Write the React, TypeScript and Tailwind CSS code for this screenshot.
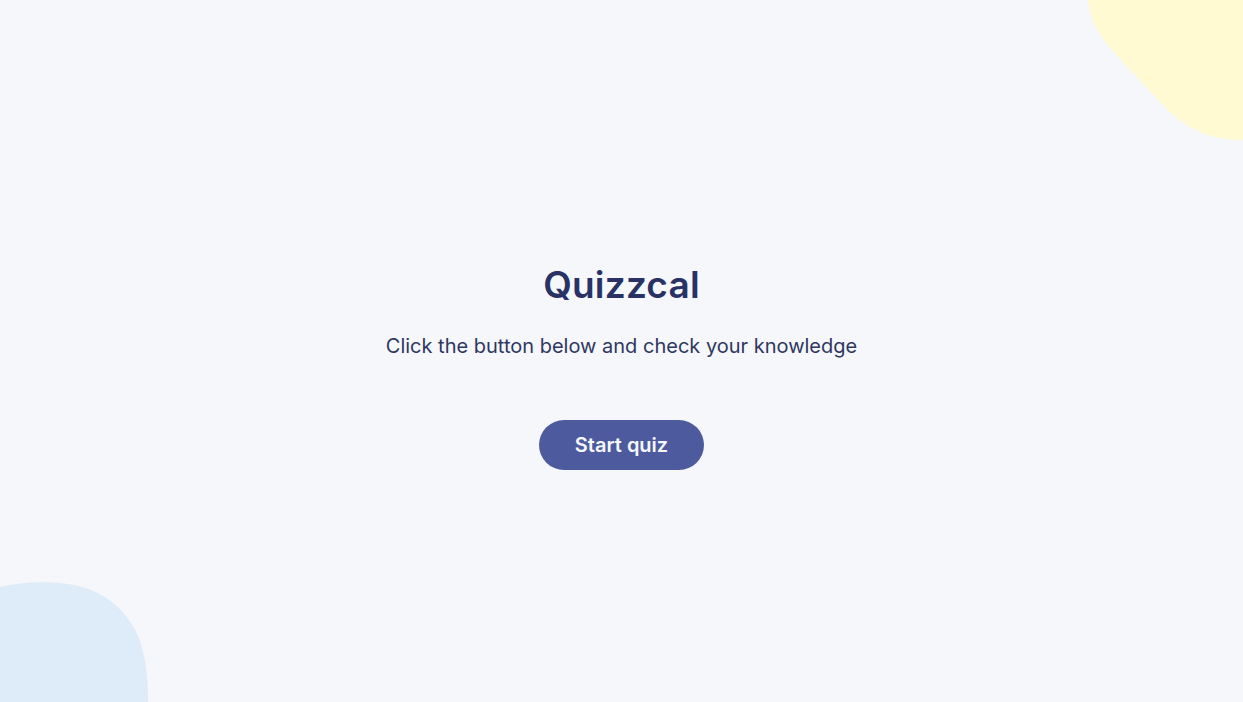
export default function App() {
  return (
    <main
      className="relative flex h-screen w-full flex-col items-center justify-center overflow-hidden bg-[#F5F7FB] text-[#293264]"
      style={{ fontFamily: 'Inter, "Noto Sans", sans-serif' }}
    >
      {/* decorative blobs */}
      <svg
        className="absolute right-0 top-0"
        width="155"
        height="142"
        viewBox="0 0 155 142"
        fill="none"
      >
        <path
          d="M0 0H155V140C120 140 96 128 74 104C52 80 30 58 16 40C6 26 1 12 0 0Z"
          fill="#FFFAD1"
        />
      </svg>
      <svg
        className="absolute bottom-0 left-0"
        width="150"
        height="120"
        viewBox="0 0 150 120"
        fill="none"
      >
        <path
          d="M0 5C20 0 45 -1 68 2C100 6 126 26 138 54C146 74 148 96 148 120H0Z"
          fill="#DEEBF8"
        />
      </svg>

      <div className="relative flex flex-col items-center pt-[34px]">
        <h1 className="text-[37px] font-semibold leading-none tracking-[0.2px]">Quizzcal</h1>
        <p className="mt-[33px] text-[20px] leading-none text-[#2f375f]">
          Click the button below and check your knowledge
        </p>
        <button className="mt-[64px] h-[50px] w-[165px] rounded-full bg-[#4D5B9E] text-[20px] font-semibold text-[#F5F7FB]">
          Start quiz
        </button>
      </div>
    </main>
  );
}
